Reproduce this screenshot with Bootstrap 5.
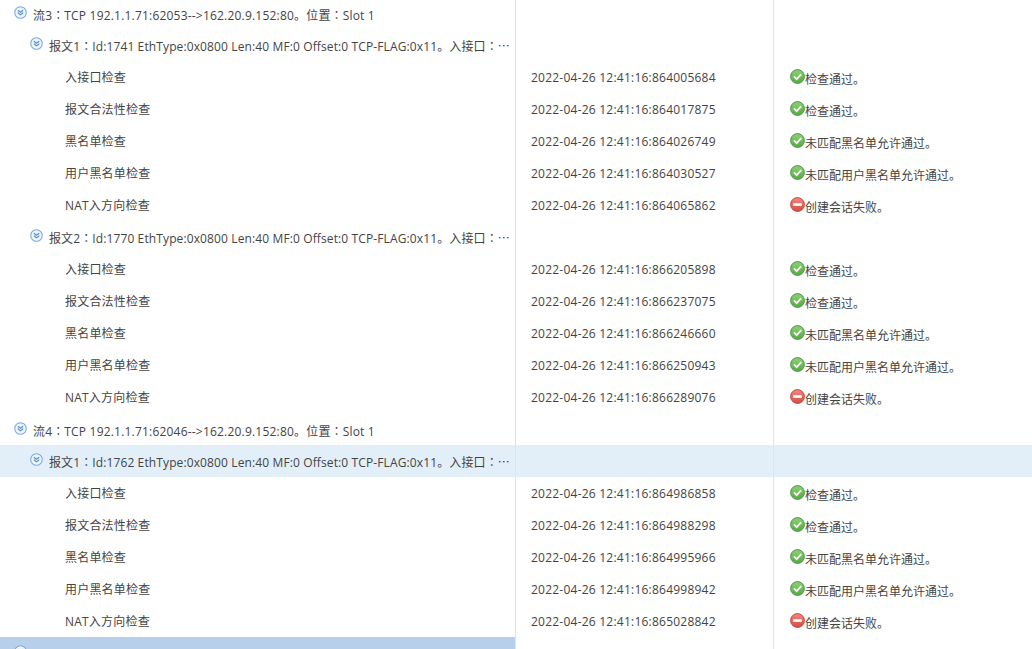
<!DOCTYPE html>
<html lang="zh-CN">
<head>
  <meta charset="UTF-8">
  <title>报文追踪</title>
  <link href="https://cdn.jsdelivr.net/npm/bootstrap@5.3.0/dist/css/bootstrap.min.css" rel="stylesheet">
  <style>
    html, body { height: 649px; overflow: hidden; background: #fff; }
    body { font-family: "Open Sans", "Noto Sans CJK SC", sans-serif; font-size: 12px; color: #444; }
    .trace-wrap { margin-top: -3px; }
    .trace-table { table-layout: fixed; width: 1032px; margin: 0; border-collapse: separate; border-spacing: 0; }
    .trace-table td { height: 32px; padding: 0; border: 0; color: #444; background: transparent; box-shadow: none; vertical-align: middle; white-space: nowrap; overflow: hidden; }
    .col-name { border-right: 1px solid #e3e3e3 !important; letter-spacing: .2px; }
    .col-time { border-right: 1px solid #e3e3e3 !important; padding-left: 15px !important; padding-top: 2px !important; letter-spacing: .23px; }
    .col-msg { padding-left: 16px !important; padding-top: 6px !important; }
    .lv-0 { padding-left: 13px !important; padding-top: 4px !important; }
    .lv-1 { padding-left: 29px !important; padding-top: 3px !important; letter-spacing: .12px; }
    .lv-2 { padding-left: 65px !important; padding-top: 2px !important; }
    .exp-icon { width: 13px; height: 13px; margin-right: 6px; margin-left: 1px; vertical-align: -1px; position: relative; top: -2px; }
    .st-icon { width: 15px; height: 15px; position: relative; top: -4px; vertical-align: middle; }
    .cjk-mark { font-family: "Noto Sans CJK TC", sans-serif; letter-spacing: 0; }
    .row-hover td { background: #e3eff8; }
    .row-sel .col-name { background: #b8cfec; }
  </style>
</head>
<body>
  <svg width="0" height="0" class="d-block">
    <defs>
      <linearGradient id="g-ok" x1="0" y1="0" x2="0" y2="1"><stop offset="0" stop-color="#8fd272"/><stop offset="1" stop-color="#55a844"/></linearGradient>
      <linearGradient id="g-err" x1="0" y1="0" x2="0" y2="1"><stop offset="0" stop-color="#f08a80"/><stop offset="1" stop-color="#d44c46"/></linearGradient>
      <symbol id="i-exp" viewBox="0 0 13 13">
        <circle cx="6.5" cy="6.5" r="5.8" fill="#eef5fc" stroke="#7aaae0" stroke-width="1.1"/>
        <path d="M3.8 4.2 6.5 6.3 9.2 4.2M3.8 6.8 6.5 8.9 9.2 6.8" fill="none" stroke="#4f8ed8" stroke-width="1.1"/>
      </symbol>
      <symbol id="i-ok" viewBox="0 0 15 15">
        <circle cx="7.5" cy="7.5" r="6.9" fill="url(#g-ok)" stroke="#4b9a3d"/>
        <path d="M4 7.5 6.7 10.2 11.2 5.2" fill="none" stroke="#fff" stroke-width="1.9"/>
      </symbol>
      <symbol id="i-err" viewBox="0 0 15 15">
        <circle cx="7.5" cy="7.5" r="6.9" fill="url(#g-err)" stroke="#c8453f"/>
        <rect x="3.2" y="6.2" width="8.6" height="2.6" fill="#fff"/>
      </symbol>
    </defs>
  </svg>
  <div class="trace-wrap">
    <table class="table trace-table" id="trace">
      <colgroup><col style="width:516px"><col style="width:258px"><col></colgroup>
      <tbody id="rows"></tbody>
    </table>
  </div>
  <script>
    const checks = ["入接口检查", "报文合法性检查", "黑名单检查", "用户黑名单检查", "NAT入方向检查"];
    const msgs = ["检查通过。", "检查通过。", "未匹配黑名单允许通过。", "未匹配用户黑名单允许通过。", "创建会话失败。"];
    const flows = [
      { no: 3, port: 62053, pkts: [
        { id: 1, pid: 1741, times: ["864005684", "864017875", "864026749", "864030527", "864065862"] },
        { id: 2, pid: 1770, times: ["866205898", "866237075", "866246660", "866250943", "866289076"] }
      ]},
      { no: 4, port: 62046, pkts: [
        { id: 1, pid: 1762, hover: true, times: ["864986858", "864988298", "864995966", "864998942", "865028842"] }
      ]}
    ];
    const exp = '<svg class="exp-icon"><use href="#i-exp"/></svg>';
    const colon = '<span class="cjk-mark" lang="zh-TW">：</span>';
    let html = "";
    flows.forEach(f => {
      html += `<tr><td class="col-name lv-0">${exp}流${f.no}${colon}TCP 192.1.1.71:${f.port}-->162.20.9.152:80。位置${colon}Slot 1</td><td class="col-time"></td><td class="col-msg"></td></tr>`;
      f.pkts.forEach(p => {
        html += `<tr class="${p.hover ? "row-hover" : ""}"><td class="col-name lv-1">${exp}报文${p.id}${colon}Id:${p.pid} EthType:0x0800 Len:40 MF:0 Offset:0 TCP-FLAG:0x11。入接口${colon}<span class="cjk-mark" lang="zh-TW">…</span></td><td class="col-time"></td><td class="col-msg"></td></tr>`;
        checks.forEach((c, i) => {
          const icon = i === 4 ? "i-err" : "i-ok";
          html += `<tr><td class="col-name lv-2">${c}</td><td class="col-time">2022-04-26 12:41:16:${p.times[i]}</td><td class="col-msg"><svg class="st-icon"><use href="#${icon}"/></svg>${msgs[i]}</td></tr>`;
        });
      });
    });
    html += `<tr class="row-sel"><td class="col-name lv-0">${exp}</td><td class="col-time"></td><td class="col-msg"></td></tr>`;
    document.getElementById("rows").innerHTML = html;
  </script>
</body>
</html>
